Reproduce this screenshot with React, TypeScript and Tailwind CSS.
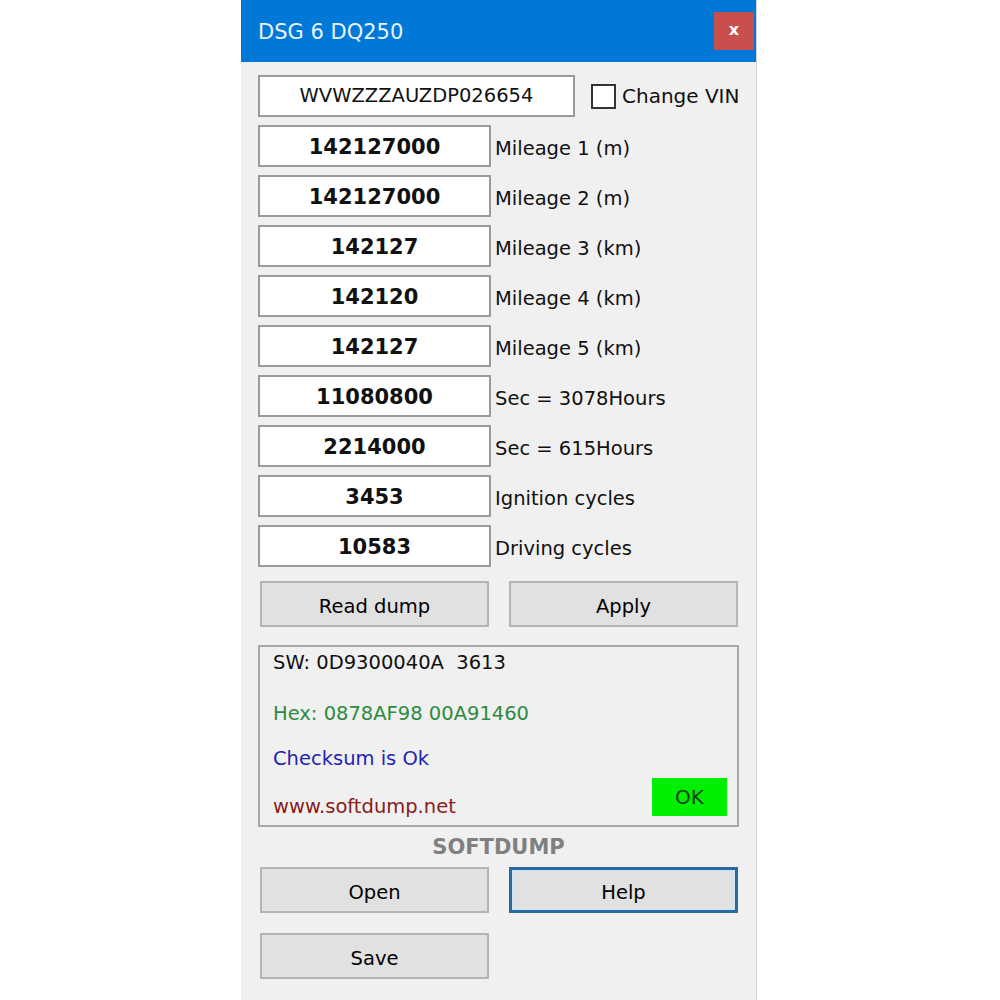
import React from 'react';

const font = "font-['DejaVu_Sans',Tahoma,sans-serif]";

const counters: { value: string; label: string }[] = [
  { value: '142127000', label: 'Mileage 1 (m)' },
  { value: '142127000', label: 'Mileage 2 (m)' },
  { value: '142127', label: 'Mileage 3 (km)' },
  { value: '142120', label: 'Mileage 4 (km)' },
  { value: '142127', label: 'Mileage 5 (km)' },
  { value: '11080800', label: 'Sec = 3078Hours' },
  { value: '2214000', label: 'Sec = 615Hours' },
  { value: '3453', label: 'Ignition cycles' },
  { value: '10583', label: 'Driving cycles' },
];

const Button: React.FC<{ label: string; focused?: boolean }> = ({ label, focused }) => (
  <button
    className={
      focused
        ? 'w-[229px] h-[46px] pt-[5px] bg-[#e1e1e1] border-[3px] border-[#2868a6] shadow-[inset_0_0_0_1px_#cde6f7] text-[19.5px] text-black'
        : 'w-[229px] h-[46px] pt-[5px] bg-[#e1e1e1] border-2 border-[#b4b4b4] text-[19.5px] text-black'
    }
  >
    {label}
  </button>
);

const App: React.FC = () => {
  return (
    <div className={`w-full h-[1000px] bg-white ${font}`}>
      <div className="ml-[241px] w-[516px] h-[1000px] bg-[#f0f0f0] border-r border-[#d4d4d4] flex flex-col">
        {/* title bar */}
        <div className="h-[62px] bg-[#0078d7] flex items-center justify-between pl-[17px] pr-[2px]">
          <span className="text-[21px] text-[#e8f4fc] pt-[4px]">DSG 6 DQ250</span>
          <div className="w-[40px] h-[38px] bg-[#c94f4f] flex items-center justify-center text-white font-bold text-[16px] pb-[2px]">
            x
          </div>
        </div>

        <div className="flex flex-col pl-[17px] pt-[13px]">
          {/* VIN */}
          <div className="flex items-center h-[42px]">
            <div className="w-[317px] h-[42px] bg-white border-2 border-[#9a9a9a] flex items-center justify-center text-[19.5px] text-[#111]">
              WVWZZZAUZDP026654
            </div>
            <div className="ml-[16px] w-[25px] h-[25px] bg-white border-2 border-[#333]" />
            <span className="ml-[6px] text-[20px] text-[#111]">Change VIN</span>
          </div>

          {/* counters */}
          <div className="flex flex-col gap-[8px] mt-[8px]">
            {counters.map((c, i) => (
              <div key={i} className="flex items-center h-[42px]">
                <div className="w-[233px] h-[42px] pt-[4px] bg-white border-2 border-[#9a9a9a] flex items-center justify-center text-[21px] font-bold text-[#111]">
                  {c.value}
                </div>
                <span className="ml-[4px] pt-[6px] text-[19.5px] text-[#111]">{c.label}</span>
              </div>
            ))}
          </div>

          <div className="flex gap-[20px] pl-[2px] mt-[14px]">
            <Button label="Read dump" />
            <Button label="Apply" />
          </div>

          {/* status panel */}
          <div className="mt-[18px] w-[481px] h-[182px] border-2 border-[#a8a8a8] flex flex-col pl-[13px] pt-[5px] text-[19.5px] leading-[22px]">
            <span className="text-[#111] whitespace-pre">SW: 0D9300040A  3613</span>
            <span className="mt-[29px] text-[#2e8b3e]">Hex: 0878AF98 00A91460</span>
            <span className="mt-[23px] text-[#2424b0]">Checksum is Ok</span>
            <div className="mt-[8px] flex items-end justify-between pr-[10px]">
              <span className="text-[#8a1c1c] relative top-[2px]">www.softdump.net</span>
              <div className="w-[75px] h-[38px] bg-[#00ef00] flex items-center justify-center text-[20px] text-[#0d3d12]">
                OK
              </div>
            </div>
          </div>

          <div className="w-[481px] h-[40px] flex items-center justify-center pt-[2px]">
            <span className="text-[21px] font-bold text-[#808080]">SOFTDUMP</span>
          </div>

          <div className="flex gap-[20px] pl-[2px]">
            <Button label="Open" />
            <Button label="Help" focused />
          </div>
          <div className="flex pl-[2px] mt-[20px]">
            <Button label="Save" />
          </div>
        </div>
      </div>
    </div>
  );
};

export default App;
